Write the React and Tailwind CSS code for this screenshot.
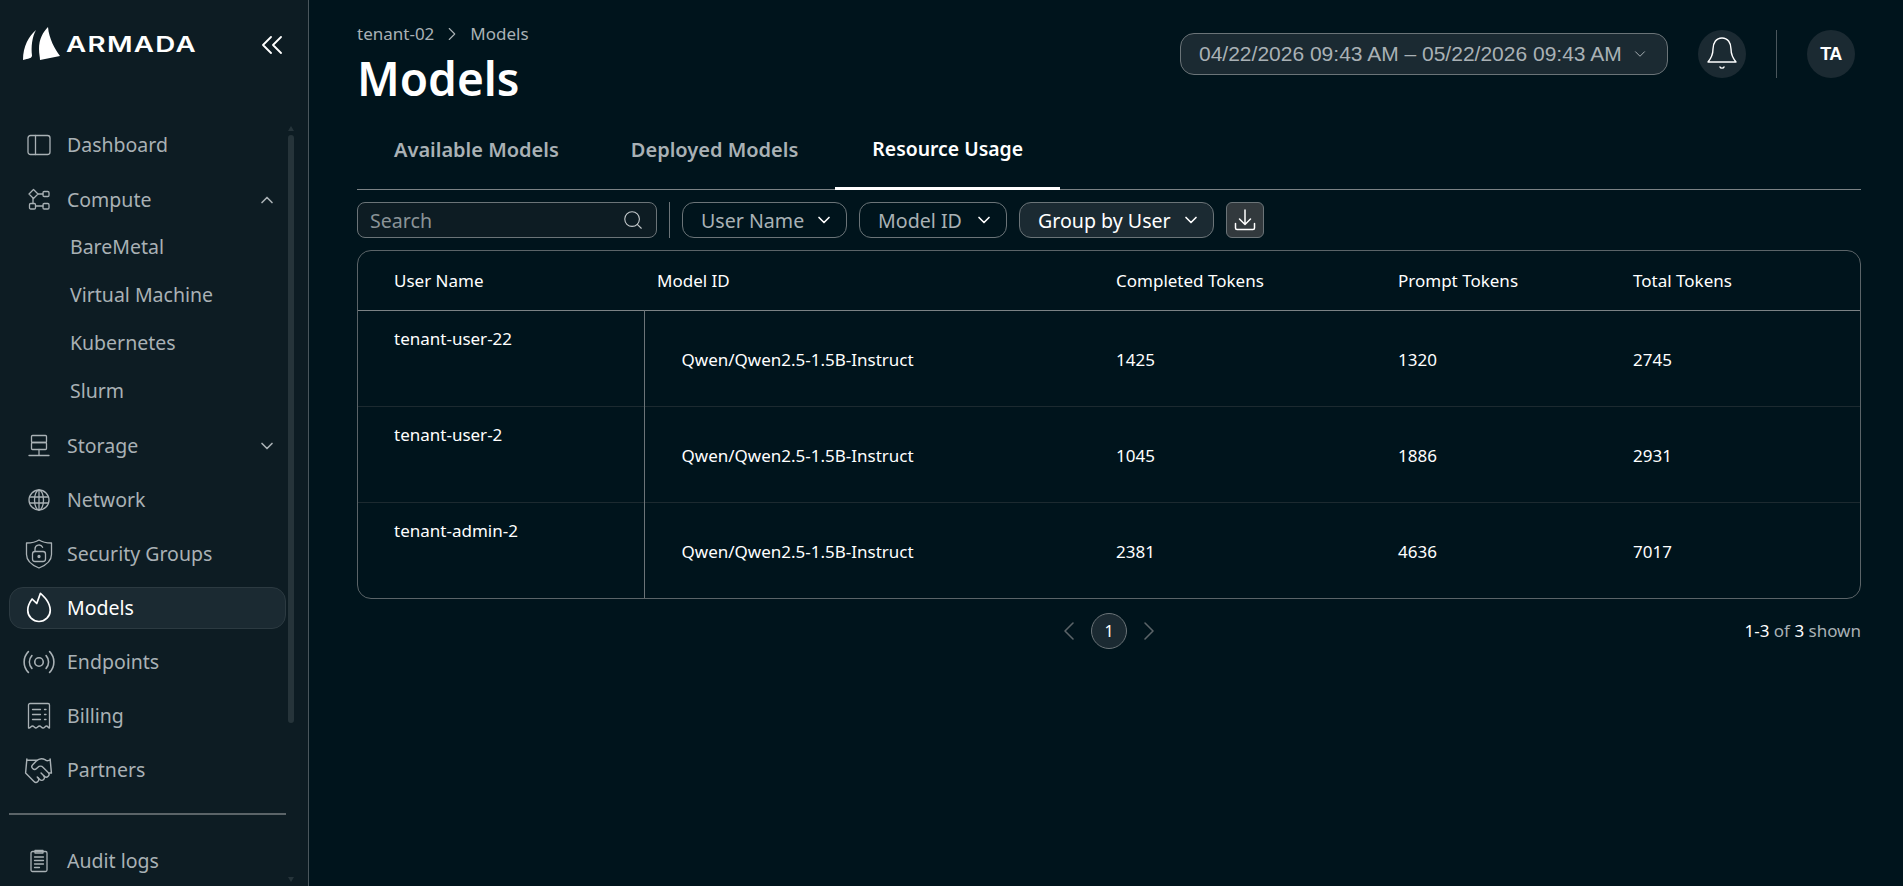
import { ChevronDown, ChevronLeft, ChevronRight, ChevronUp, Handshake, Search } from 'lucide-react';
import { PiBroadcastLight, PiFireSimpleLight } from 'react-icons/pi';

const svgProps = {
  fill: 'none',
  stroke: 'currentColor',
  strokeWidth: 1.3,
  strokeLinecap: 'round',
  strokeLinejoin: 'round',
};

function DashboardIcon() {
  return (
    <svg width="24" height="24" viewBox="0 0 24 24" {...svgProps}>
      <rect x="1" y="2.500" width="22" height="19" rx="2.500" />
      <path d="M8.500 2.500v19" />
    </svg>
  );
}

function ComputeIcon() {
  return (
    <svg width="24" height="24" viewBox="0 0 24 24" {...svgProps}>
      <path d="M6.500 1.500 11 6l-4.500 4.500L2 6z" />
      <rect x="16" y="3.500" width="6" height="5" rx="1.200" />
      <rect x="2.500" y="15.500" width="6" height="5.500" rx="1.200" />
      <rect x="16" y="15.500" width="6" height="5.500" rx="1.200" />
      <path d="M11 6h5M8.500 18H16M6 10.500v5" />
    </svg>
  );
}

function StorageIcon() {
  return (
    <svg width="24" height="24" viewBox="0 0 24 24" {...svgProps}>
      <rect x="4.500" y="1.500" width="15" height="7" rx="1" />
      <rect x="4.500" y="8.500" width="15" height="7" rx="1" />
      <path d="M12 15.500V21M2 21.500h20" />
    </svg>
  );
}

function NetworkIcon() {
  return (
    <svg width="24" height="24" viewBox="0 0 24 24" {...svgProps}>
      <circle cx="12" cy="12" r="10" />
      <ellipse cx="12" cy="12" rx="4.500" ry="10" />
      <path d="M12 2v20M2.500 9h19M2.500 15h19" />
    </svg>
  );
}

function ShieldIcon() {
  return (
    <svg width="28" height="30" viewBox="0 0 28 30" {...svgProps}>
      <path d="M14 1c3 2 7.500 3 12.500 3v11.500c0 6-5 10.500-12.500 13.500C6.500 26 1.500 21.500 1.500 15.500V4C6.500 4 11 3 14 1z" />
      <rect x="7.500" y="12.500" width="13" height="10" rx="2.500" />
      <path d="M10 12.500V10a4 4 0 0 1 7.600-1.700" />
      <circle cx="14" cy="17.500" r="1" fill="currentColor" />
    </svg>
  );
}

function BillingIcon() {
  return (
    <svg width="24" height="28" viewBox="0 0 24 28" {...svgProps}>
      <path d="M1.500 26V3a1.500 1.500 0 0 1 1.500-1.500h18A1.500 1.500 0 0 1 22.500 3v23c-1.500 0-1.500-2-3-2s-1.800 2-3.500 2-1.800-2-3.500-2-2 2-3.500 2-2-2-3.500-2-2 2-3.500 2z" />
      <path d="M5.500 7.500h8M5.500 12.500h8M5.500 17.500h8M17.500 7.500h1.500M17.500 12.500h1.500M17.500 17.500h1.500" />
    </svg>
  );
}

function AuditIcon() {
  return (
    <svg width="24" height="24" viewBox="0 0 24 24" {...svgProps}>
      <rect x="4" y="2.500" width="16" height="20" rx="1.500" />
      <path d="M8 1.500h8v2.500H8z" />
      <path d="M7.500 8h9M7.500 11.500h9M7.500 15h9M7.500 18.500h5" />
    </svg>
  );
}

function BellIcon() {
  return (
    <svg width="30" height="34" viewBox="0 0 30 34" fill="none" stroke="#ffffff" strokeWidth="1.400" strokeLinecap="round" strokeLinejoin="round">
      <path d="M15 1C9 1 6 6 6 12c0 7-2.500 10-5 13h28c-2.500-3-5-6-5-13 0-6-3-11-9-11z" />
      <path d="M13 30c.5 1.500 3.500 1.500 4 0" />
    </svg>
  );
}

function DownloadIcon() {
  return (
    <svg width="24" height="24" viewBox="0 0 24 24" fill="none" stroke="#ffffff" strokeWidth="1.500" strokeLinecap="round" strokeLinejoin="round">
      <path d="M12 2v14M6.500 11l5.500 5.500 5.500-5.500" />
      <path d="M2.500 15.500V20a1.500 1.500 0 0 0 1.500 1.500h16a1.500 1.500 0 0 0 1.500-1.500v-4.500" />
    </svg>
  );
}

function CollapseIcon() {
  return (
    <svg width="22" height="18" viewBox="0 0 22 18" fill="none" stroke="#ffffff" strokeWidth="1.800" strokeLinecap="round" strokeLinejoin="round">
      <path d="M10 1 2 9l8 8M20 1l-8 8 8 8" />
    </svg>
  );
}

function Logo() {
  return (
    <div className="flex items-center">
      <svg width="38" height="34" viewBox="0 0 38 34" fill="#ffffff">
        <path d="M14 3C7 9 1 19 1 33l2-.500c5-1 7-2 7-4C9 20 10 10 14 3z" />
        <path d="M26 0c-5 5-9 12-9 22 0 5 1 8 1 11l20-4C33 22 27 12 26 0z" />
      </svg>
      <span className="ml-[6px] origin-left scale-x-[1.32] font-['Inter',sans-serif] text-[21px] leading-none font-semibold tracking-[1px] text-white">
        ARMADA
      </span>
    </div>
  );
}

function NavItem({ icon, label, active, chevron, className = '' }) {
  return (
    <div
      className={`mr-[22px] ml-[9px] flex h-[42px] items-center rounded-[14px] border pr-[8px] ${
        active ? 'border-[#2c3a41] bg-[#1b2a32] text-white' : 'border-transparent text-[#a9b1b5]'
      } ${className}`}
    >
      <div className="flex w-[57px] shrink-0 justify-center">{icon}</div>
      <span className="flex-1 text-[19.5px] leading-none">{label}</span>
      {chevron === 'up' && <ChevronUp size={20} />}
      {chevron === 'down' && <ChevronDown size={20} />}
    </div>
  );
}

function SubItem({ label }) {
  return <div className="flex h-[48px] items-center pl-[70px] text-[19.5px] leading-none text-[#a9b1b5]">{label}</div>;
}

function Sidebar() {
  return (
    <aside className="relative flex h-[886px] w-[309px] shrink-0 flex-col overflow-hidden border-r border-[#4a565c] bg-[#0d1c23]">
      <div className="flex h-[124px] items-start justify-between pt-[27px] pr-[25px] pl-[22px]">
        <Logo />
        <div className="mt-[9px]">
          <CollapseIcon />
        </div>
      </div>
      <nav className="flex flex-col">
        <NavItem icon={<DashboardIcon />} label="Dashboard" />
        <NavItem icon={<ComputeIcon />} label="Compute" chevron="up" className="mt-[13px]" />
        <div className="mt-[2px] mb-[10px] flex flex-col">
          <SubItem label="BareMetal" />
          <SubItem label="Virtual Machine" />
          <SubItem label="Kubernetes" />
          <SubItem label="Slurm" />
        </div>
        <NavItem icon={<StorageIcon />} label="Storage" chevron="down" />
        <NavItem icon={<NetworkIcon />} label="Network" className="mt-[12px]" />
        <NavItem icon={<ShieldIcon />} label="Security Groups" className="mt-[12px]" />
        <NavItem icon={<PiFireSimpleLight size={36} className="text-white" />} label="Models" active className="mt-[12px]" />
        <NavItem icon={<PiBroadcastLight size={34} />} label="Endpoints" className="mt-[12px]" />
        <NavItem icon={<BillingIcon />} label="Billing" className="mt-[12px]" />
        <NavItem icon={<Handshake size={31} strokeWidth={1.100} />} label="Partners" className="mt-[12px]" />
        <div className="mt-[22px] mr-[22px] ml-[9px] h-[2px] bg-[#5b6468]" />
        <NavItem icon={<AuditIcon />} label="Audit logs" className="mt-[25px]" />
      </nav>
      {/* scrollbar of the nav list */}
      <div className="absolute top-[126px] left-[288px] h-0 w-0 border-x-[3px] border-b-[5px] border-x-transparent border-b-[#26343a]" />
      <div className="absolute top-[135px] left-[288px] h-[588px] w-[6px] rounded-[3px] bg-[#26343a]" />
      <div className="absolute top-[877px] left-[288px] h-0 w-0 border-x-[3px] border-t-[5px] border-x-transparent border-t-[#26343a]" />
    </aside>
  );
}

function FilterButton({ label, bright, widthClass }) {
  return (
    <button
      className={`flex h-[36px] items-center justify-between rounded-[12px] border border-[#6b7478] pr-[12px] pl-[18px] text-[19.6px] leading-none ${widthClass} ${
        bright ? 'bg-[#1b2a32] text-white' : 'text-[#a9b1b5]'
      }`}
    >
      <span className="pt-[2px]">{label}</span>
      <ChevronDown size={20} className="text-white" />
    </button>
  );
}

const rows = [
  { user: 'tenant-user-22', completed: 1425, prompt: 1320, total: 2745 },
  { user: 'tenant-user-2', completed: 1045, prompt: 1886, total: 2931 },
  { user: 'tenant-admin-2', completed: 2381, prompt: 4636, total: 7017 },
];

function UsageTable() {
  return (
    <div className="mt-[12px] overflow-hidden rounded-[14px] border border-[#5b6468]">
      <table className="w-full table-fixed text-left text-[17px] leading-6 text-white">
        <colgroup>
          <col className="w-[286px]" />
          <col className="w-[442px]" />
          <col className="w-[282px]" />
          <col className="w-[235px]" />
          <col />
        </colgroup>
        <thead>
          <tr className="h-[59px] border-b border-[#7b8285]">
            <th className="pt-[2px] pl-[36px] font-normal">User Name</th>
            <th className="pt-[2px] pl-[13px] font-normal">Model ID</th>
            <th className="pt-[2px] pl-[30px] font-normal">Completed Tokens</th>
            <th className="pt-[2px] pl-[30px] font-normal">Prompt Tokens</th>
            <th className="pt-[2px] pl-[30px] font-normal">Total Tokens</th>
          </tr>
        </thead>
        <tbody>
          {rows.map((row, i) => (
            <tr key={row.user} className={`h-[96px] ${i < rows.length - 1 ? 'border-b border-[#1c2a30]' : ''}`}>
              <td className="border-r border-[#6b7478] pt-[16px] pl-[36px] align-top">{row.user}</td>
              <td className="pt-[4px] pl-[37px]">Qwen/Qwen2.5-1.5B-Instruct</td>
              <td className="pt-[4px] pl-[30px]">{row.completed}</td>
              <td className="pt-[4px] pl-[30px]">{row.prompt}</td>
              <td className="pt-[4px] pl-[30px]">{row.total}</td>
            </tr>
          ))}
        </tbody>
      </table>
    </div>
  );
}

export default function App() {
  return (
    <div className="flex h-[886px] w-full overflow-hidden bg-[#00141c] font-['Noto_Sans',sans-serif]">
      <Sidebar />
      <main className="flex min-w-0 flex-1 flex-col pr-[42px] pl-[48px]">
        <div className="flex items-start justify-between">
          <div>
            <div className="mt-[22px] flex h-[24px] items-center text-[17px] text-[#a9b1b5]">
              <span>tenant-02</span>
              <ChevronRight size={22} strokeWidth={1.200} className="mx-[7px]" />
              <span>Models</span>
            </div>
            <h1 className="mt-[2px] mb-[1px] text-[46px] leading-[60px] font-semibold text-white">Models</h1>
          </div>
          <div className="mt-[30px] mr-[6px] flex items-center">
            <button className="flex h-[42px] w-[488px] items-center justify-between rounded-[14px] border border-[#6b7478] bg-[#1b2a32] pr-[18px] pl-[18px] font-['Liberation_Sans',sans-serif] text-[21px] text-[#a9b1b5]">
              <span>04/22/2026 09:43 AM – 05/22/2026 09:43 AM</span>
              <ChevronDown size={18} strokeWidth={1.300} />
            </button>
            <div className="ml-[30px] flex h-[48px] w-[48px] items-center justify-center rounded-full bg-[#1b2a32]">
              <BellIcon />
            </div>
            <div className="mx-[30px] h-[48px] w-px bg-[#4a565c]" />
            <div className="flex h-[48px] w-[48px] items-center justify-center rounded-full bg-[#1b2a32] font-['Liberation_Sans',sans-serif] text-[18px] font-bold tracking-[-0.5px] text-white">
              TA
            </div>
          </div>
        </div>

        <div className="mt-[6px] flex h-[75px] items-stretch border-b border-[#7b8285]">
          <div className="flex items-center pr-[35px] pb-[5px] pl-[37px] text-[20px] font-semibold text-[#a9b1b5]">Available Models</div>
          <div className="flex items-center px-[37px] pb-[5px] text-[20px] font-semibold text-[#a9b1b5]">Deployed Models</div>
          <div className="mb-[-1px] flex items-center border-b-[3px] border-white px-[37px] pb-[5px] text-[19.4px] font-semibold text-white">
            Resource Usage
          </div>
        </div>

        <div className="mt-[12px] flex items-center">
          <div className="flex h-[36px] w-[300px] items-center justify-between rounded-[8px] border border-[#6b7478] bg-[#0d1c23] pr-[12px] pl-[12px] text-[19.6px] text-[#8a9397]">
            <span className="pt-[2px]">Search</span>
            <Search size={22} strokeWidth={1.200} className="text-[#c4c9cb]" />
          </div>
          <div className="mx-[12px] h-[36px] w-px bg-[#6b7478]" />
          <FilterButton label="User Name" widthClass="w-[165px]" />
          <div className="w-[12px]" />
          <FilterButton label="Model ID" widthClass="w-[148px]" />
          <div className="w-[12px]" />
          <FilterButton label="Group by User" bright widthClass="w-[195px]" />
          <button className="ml-[12px] flex h-[36px] w-[38px] items-center justify-center rounded-[6px] border border-[#6b7478] bg-[#32393d]">
            <DownloadIcon />
          </button>
        </div>

        <UsageTable />

        <div className="relative mt-[14px] flex h-[36px] items-center justify-center">
          <div className="flex items-center gap-[6px] text-[#5b6468]">
            <ChevronLeft size={32} strokeWidth={1.200} />
            <div className="flex h-[36px] w-[36px] items-center justify-center rounded-full border border-[#6b7478] bg-[#1b2a32] text-[16px] text-white">
              1
            </div>
            <ChevronRight size={32} strokeWidth={1.200} />
          </div>
          <div className="absolute right-0 text-[17px] text-[#a9b1b5]">
            <span className="text-white">1-3</span> of <span className="text-white">3</span> shown
          </div>
        </div>
      </main>
    </div>
  );
}
